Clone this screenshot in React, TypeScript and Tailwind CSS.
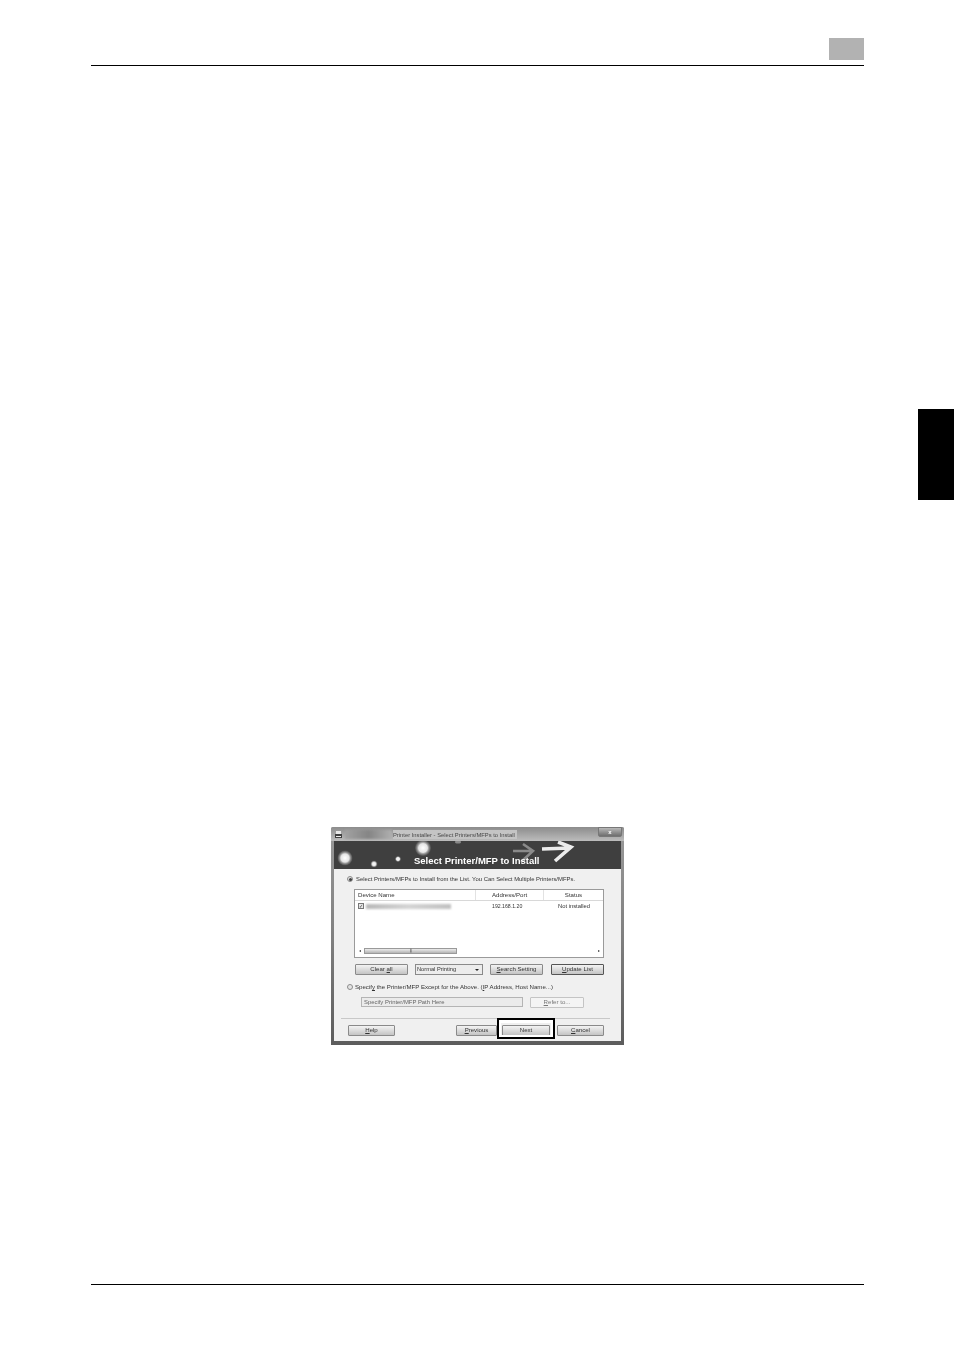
import React from "react";

function Btn({ children, w, dark }: { children: React.ReactNode; w: string; dark?: boolean }) {
  return (
    <div
      className={`${w} h-[11px] flex items-center justify-center bg-gradient-to-b from-[#f4f4f4] to-[#c4c4c4] border ${
        dark ? "border-[#555555]" : "border-[#8a8a8a]"
      } rounded-[1px] text-[#333333]`}
    >
      <span className="-mt-[1px] underline-offset-[0.5px]">{children}</span>
    </div>
  );
}

function Radio({ on }: { on?: boolean }) {
  return (
    <div className="w-[6px] h-[6px] rounded-full border border-[#8c8c8c] bg-[#e4e4e4] flex items-center justify-center">
      {on ? <div className="w-[3px] h-[3px] rounded-full bg-[#444444]" /> : null}
    </div>
  );
}

function Dialog() {
  return (
    <div className="ml-[240px] mt-[761px] w-[293px] h-[218px] relative">
      <div className="w-full h-full flex flex-col bg-gradient-to-b from-[#9a9a9a] via-[#808080] to-[#5c5c5c] rounded-t-[2px] blur-[0.35px] font-['Liberation_Sans',sans-serif] text-[6.1px] leading-[8px] text-[#333333] overflow-hidden">
        {/* title bar */}
        <div className="h-[14px] flex items-start bg-gradient-to-b from-[#8c8c8c] to-[#bcbcbc]">
          <svg width="11" height="14" viewBox="0 0 11 14" className="ml-[2px] shrink-0">
            <rect x="2" y="7" width="7" height="4" fill="#3f3f3f" />
            <rect x="3" y="4" width="5" height="3" fill="#e8e8e8" />
            <rect x="3" y="9" width="5" height="1" fill="#eeeeee" />
          </svg>
          <div className="ml-[1px] mt-[3px] w-[47px] h-[9px] bg-gradient-to-r from-[#a2a2a2] via-[#858585] to-[#b0b0b0] blur-[1px]" />
          <div className="ml-[1px] mt-[3px] w-[124px] h-[9px] bg-[#c4c4c4] text-[5.8px] text-[#474747] whitespace-nowrap flex items-center">
            Printer Installer - Select Printers/MFPs to Install
          </div>
          <div className="ml-auto mr-[2px] w-[24px] h-[10px] bg-gradient-to-b from-[#b8b8b8] to-[#6e6e6e] border border-[#777777] rounded-b-[2px] flex items-center justify-center text-white text-[6px] font-bold">
            x
          </div>
        </div>

        <div className="flex-1 flex flex-col mx-[3px] mb-[4px]">
          {/* banner */}
          <div className="h-[28px] relative bg-[#3f3f3f] overflow-hidden">
            <svg width="287" height="28" viewBox="0 0 287 28" className="absolute inset-0">
              <defs>
                <radialGradient id="orb">
                  <stop offset="0" stopColor="#ffffff" />
                  <stop offset="0.55" stopColor="#e4e4e4" />
                  <stop offset="1" stopColor="#8c8c8c" stopOpacity="0.2" />
                </radialGradient>
              </defs>
              <circle cx="11" cy="17" r="7.5" fill="url(#orb)" />
              <circle cx="89" cy="7" r="8" fill="url(#orb)" />
              <circle cx="40" cy="23" r="3.5" fill="url(#orb)" />
              <circle cx="64" cy="18" r="3" fill="url(#orb)" />
              <ellipse cx="124" cy="1" rx="3" ry="1.5" fill="#8a8a8a" />
              <path d="M179 10H199M189 3L199 10L187 21" fill="none" stroke="#8a8a8a" strokeWidth="2.6" />
              <path d="M208 8L236 7M224 1L237 6L221 20" fill="none" stroke="#ececec" strokeWidth="3.6" />
            </svg>
            <div className="absolute left-[80px] top-[13px] font-['Liberation_Sans',sans-serif] font-bold text-[9.5px] leading-[14px] text-white whitespace-nowrap">
              Select Printer/MFP to Install
            </div>
          </div>

          {/* body */}
          <div className="flex-1 bg-[#f0f0f0] flex flex-col">
            <div className="mt-[6px] ml-[13px] h-[8px] flex items-center gap-[3px] whitespace-nowrap text-[5.9px]">
              <Radio on />
              <span>Select Printers/MFPs to Install from the List. You Can Select Multiple Printers/MFPs.</span>
            </div>

            <div className="mt-[6px] ml-[20px] w-[250px] h-[69px] bg-white border border-[#9a9a9a] flex flex-col">
              <div className="h-[11px] grid grid-cols-[121px_68px_1fr] border-b border-[#d8d8d8] items-center">
                <div className="pl-[3px] border-r border-[#e2e2e2] h-full flex items-center">Device Name</div>
                <div className="pl-[16px] border-r border-[#e2e2e2] h-full flex items-center">Address/Port</div>
                <div className="text-center">Status</div>
              </div>
              <div className="h-[10px] grid grid-cols-[121px_68px_1fr] items-center">
                <div className="pl-[3px] flex items-center gap-[2px]">
                  <div className="w-[6px] h-[6px] border border-[#777777] bg-[#e8e8e8] flex items-center justify-center text-[5px] leading-none">✓</div>
                  <div className="w-[85px] h-[5px] bg-gradient-to-r from-[#b8b8b8] via-[#d4d4d4] to-[#c0c0c0] blur-[0.8px]" />
                </div>
                <div className="pl-[16px] whitespace-nowrap text-[5.2px]">192.168.1.20</div>
                <div className="pl-[14px] whitespace-nowrap text-[5.8px]">Not installed</div>
              </div>
              <div className="flex-1" />
              <div className="h-[8px] mb-[2px] flex items-center">
                <div className="w-[9px] text-center text-[4px]">◂</div>
                <div className="w-[93px] h-[6px] bg-gradient-to-b from-[#ececec] to-[#b4b4b4] border border-[#9a9a9a] flex items-center justify-center text-[4px] leading-none">
                  ⫼
                </div>
                <div className="flex-1" />
                <div className="w-[9px] text-center text-[4px]">▸</div>
              </div>
            </div>

            <div className="mt-[6px] ml-[21px] flex items-start">
              <Btn w="w-[53px]">
                Clear <u>a</u>ll
              </Btn>
              <div className="ml-[7px] w-[68px] h-[11px] bg-[#ececec] border border-[#8a8a8a] flex items-center pl-[1px] pr-[3px] justify-between text-[5.7px]">
                <span className="-mt-[1px]">Normal Printing</span>
                <span className="w-0 h-0 border-x-[2px] border-x-transparent border-t-[2px] border-t-[#222222]" />
              </div>
              <div className="ml-[7px]">
                <Btn w="w-[53px]">
                  <u>S</u>earch Setting
                </Btn>
              </div>
              <div className="ml-[8px]">
                <Btn w="w-[53px]" dark>
                  <u>U</u>pdate List
                </Btn>
              </div>
            </div>

            <div className="mt-[8px] ml-[13px] h-[8px] flex items-center gap-[2px] whitespace-nowrap">
              <Radio />
              <span className="underline-offset-[0.5px]">
                Specif<u>y</u> the Printer/MFP Except for the Above. (<u>I</u>P Address, Host Name...)
              </span>
            </div>

            <div className="mt-[6px] ml-[27px] flex items-start">
              <div className="w-[162px] h-[10px] bg-[#ebebeb] border border-[#b4b4b4] flex items-center pl-[2px] text-[5.9px] text-[#666666] whitespace-nowrap">
                Specify Printer/MFP Path Here
              </div>
              <div className="ml-[7px] w-[54px] h-[11px] bg-[#f4f4f4] border border-[#c4c4c4] rounded-[1px] flex items-center justify-center text-[#777777]">
                <span className="-mt-[1px] underline-offset-[0.5px]">
                  <u>R</u>efer to...
                </span>
              </div>
            </div>

            <div className="mt-[10px] ml-[7px] w-[269px] h-px bg-[#c8c8c8]" />

            <div className="mt-[6px] ml-[14px] flex items-start">
              <Btn w="w-[47px]">
                <u>H</u>elp
              </Btn>
              <div className="ml-[61px]">
                <Btn w="w-[41px]">
                  <u>P</u>revious
                </Btn>
              </div>
              <div className="ml-[5px]">
                <Btn w="w-[48px]">Next</Btn>
              </div>
              <div className="ml-[7px]">
                <Btn w="w-[47px]">
                  <u>C</u>ancel
                </Btn>
              </div>
            </div>
          </div>
        </div>
      </div>
      {/* callout around Next */}
      <div className="absolute left-[166px] top-[191px] w-[58px] h-[21px] border-2 border-black">
        <div className="w-full h-full border-x-[2px] border-t-[3px] border-b-[2px] border-white" />
      </div>
    </div>
  );
}

export default function App() {
  return (
    <div className="relative w-[954px] h-[1350px] bg-white overflow-hidden pl-[91px] pr-[90px]">
      <div className="h-[66px] border-b border-black flex justify-end items-start">
        <div className="mt-[38px] w-[35px] h-[22px] bg-[#b2b2b2]" />
      </div>
      <Dialog />
      <div className="mt-[239px] h-px bg-black" />
      <div className="absolute right-0 top-[409px] w-[36px] h-[91px] bg-black" />
    </div>
  );
}
